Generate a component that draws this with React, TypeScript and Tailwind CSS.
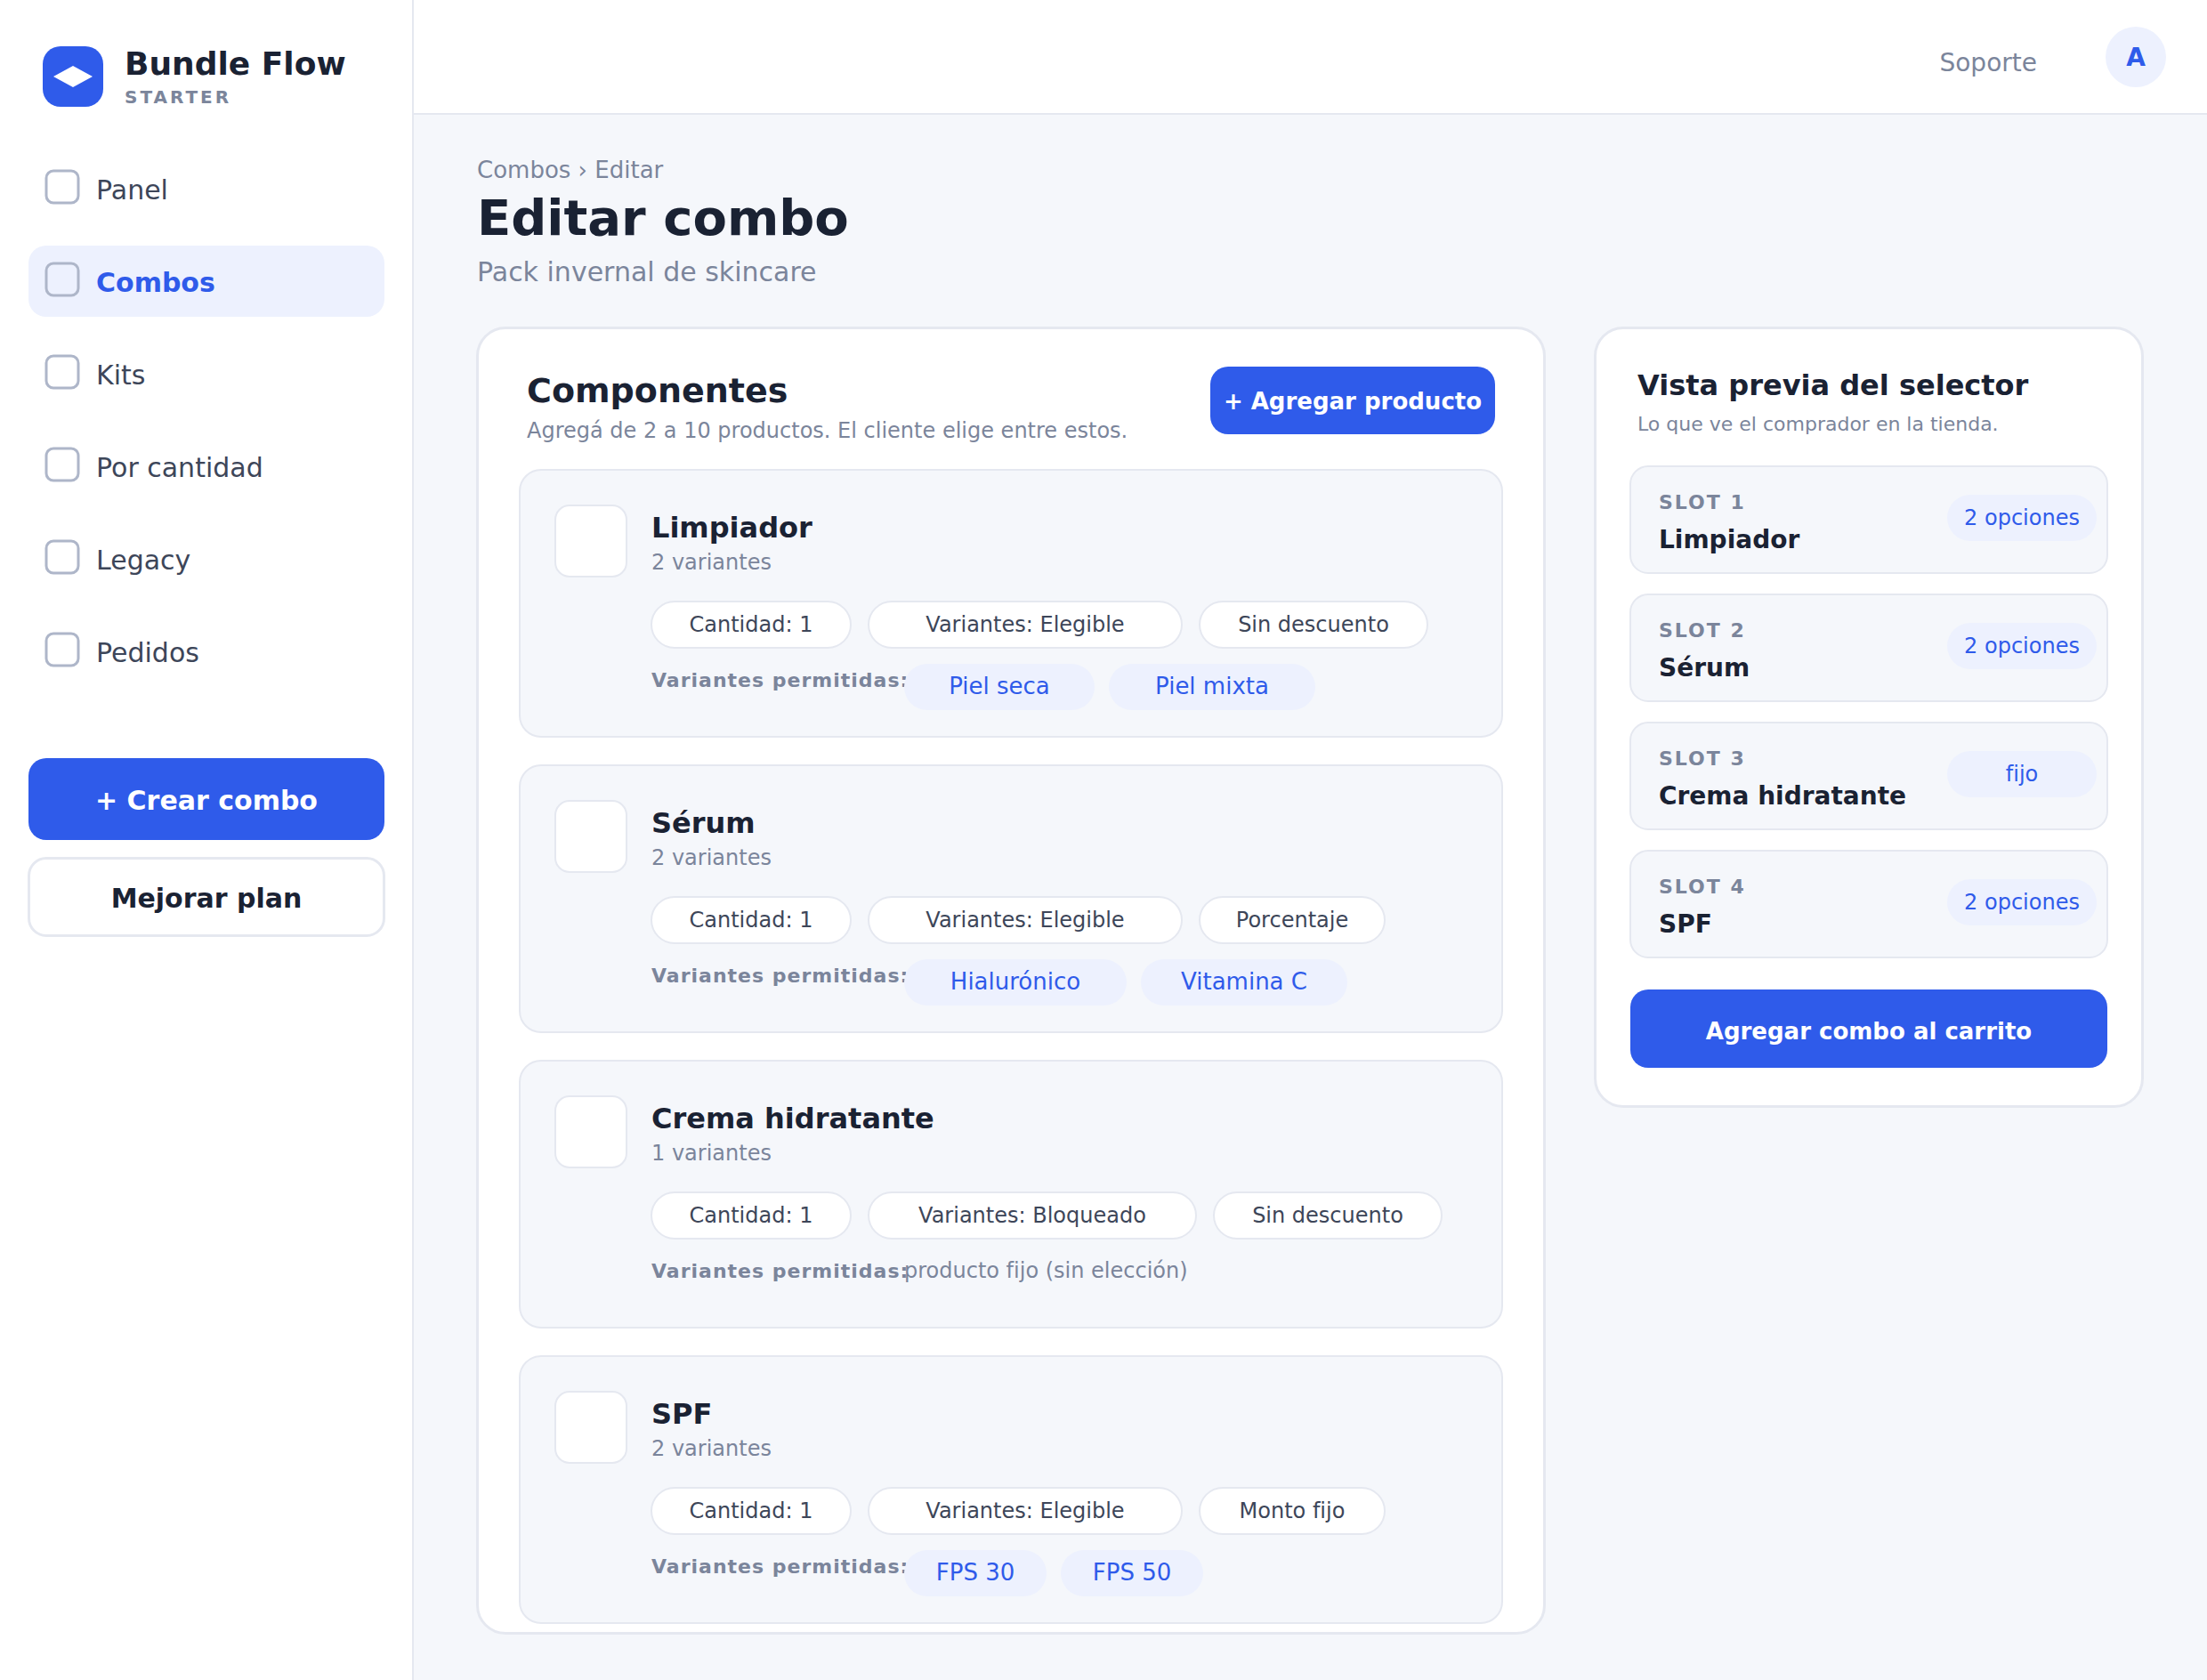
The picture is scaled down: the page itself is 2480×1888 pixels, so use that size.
type Component = {
  name: string;
  variants: number;
  mode: string;
  discount: string;
  allowed: string[];
};

const NAV = ["Panel", "Combos", "Kits", "Por cantidad", "Legacy", "Pedidos"];

const COMPONENTS: Component[] = [
  {
    name: "Limpiador",
    variants: 2,
    mode: "Elegible",
    discount: "Sin descuento",
    allowed: ["Piel seca", "Piel mixta"],
  },
  {
    name: "Sérum",
    variants: 2,
    mode: "Elegible",
    discount: "Porcentaje",
    allowed: ["Hialurónico", "Vitamina C"],
  },
  {
    name: "Crema hidratante",
    variants: 1,
    mode: "Bloqueado",
    discount: "Sin descuento",
    allowed: [],
  },
  {
    name: "SPF",
    variants: 2,
    mode: "Elegible",
    discount: "Monto fijo",
    allowed: ["FPS 30", "FPS 50"],
  },
];

function Logo() {
  return (
    <svg width="68" height="68" viewBox="0 0 68 68" aria-hidden="true">
      <rect width="68" height="68" rx="20" fill="#2f5bea" />
      <path d="M34 22 56 34 34 46 12 34Z" fill="#fff" />
    </svg>
  );
}

function NavIcon() {
  return (
    <svg width="40" height="40" viewBox="0 0 40 40" fill="none" aria-hidden="true">
      <rect x="2" y="2" width="36" height="36" rx="8" stroke="#aeb6c9" strokeWidth="3" />
    </svg>
  );
}

function Sidebar() {
  return (
    <aside className="w-[465px] shrink-0 border-r-2 border-[#e5e8f0] bg-white pt-[52px] pr-[31px] pl-8">
      <div className="flex gap-6 pl-4">
        <Logo />
        <div>
          <div className="text-[36px] leading-[40px] font-bold text-[#1a2233]">
            Bundle Flow
          </div>
          <div className="text-[20px] leading-[34px] font-bold tracking-[3px] text-[#7b859b]">
            STARTER
          </div>
        </div>
      </div>

      <nav className="mt-[46px] flex flex-col gap-6">
        {NAV.map((item) => {
          const active = item === "Combos";
          return (
            <a
              key={item}
              href="#"
              className={`flex h-20 gap-[18px] rounded-[20px] px-[18px] pt-[18px] text-[30px] leading-[48px] ${
                active
                  ? "bg-[#edf1fe] font-bold text-[#2f5bea]"
                  : "text-[#3d4659]"
              }`}
            >
              <NavIcon />
              {item}
            </a>
          );
        })}
      </nav>

      <button className="mt-20 h-[92px] w-full rounded-[20px] bg-[#2f5bea] pt-[3px] text-[30px] font-bold text-white">
        + Crear combo
      </button>
      <div className="-mx-px mt-[19px]">
        <button className="h-[90px] w-full rounded-[21px] border-3 border-[#e5e8f0] bg-white pt-[3px] text-[30px] font-bold text-[#1a2233]">
          Mejorar plan
        </button>
      </div>
    </aside>
  );
}

function Pill({ text }: { text: string }) {
  return (
    <span
      className="flex h-[54px] items-center justify-center rounded-full border-2 border-[#e5e8f0] bg-white text-[24px] whitespace-nowrap text-[#3d4659]"
      style={{ width: 50 + text.length * 16 }}
    >
      {text}
    </span>
  );
}

function Chip({ text }: { text: string }) {
  return (
    <span
      className="flex h-[52px] items-center justify-center rounded-full bg-[#edf1fe] pb-[2px] text-[26px] whitespace-nowrap text-[#2f5bea]"
      style={{ width: 52 + text.length * 18 }}
    >
      {text}
    </span>
  );
}

function ComponentCard({ item }: { item: Component }) {
  return (
    <article className="flex gap-[26px] rounded-[25px] border-2 border-[#e5e8f0] bg-[#f5f7fb] px-[38px] pt-[38px] pb-[29px]">
      <div className="size-[82px] shrink-0 rounded-[17px] border-2 border-[#e5e8f0] bg-white" />
      <div className="min-w-0">
        <div className="pl-px">
          <h3 className="text-[32px] leading-[52px] font-bold text-[#1a2233]">
            {item.name}
          </h3>
          <p className="text-[24px] leading-[26px] text-[#7b859b]">
            {item.variants} variantes
          </p>
        </div>
        <div className="mt-[30px] flex gap-[18px]">
          <Pill text="Cantidad: 1" />
          <Pill text={`Variantes: ${item.mode}`} />
          <Pill text={item.discount} />
        </div>
        <div className="mt-[17px] flex h-[52px] pl-px">
          <span className="w-[284px] shrink-0 text-[22px] leading-[38px] font-bold tracking-[1px] whitespace-nowrap text-[#7b859b]">
            Variantes permitidas:
          </span>
          {item.allowed.length > 0 ? (
            <div className="relative flex gap-4">
              {item.allowed.map((v) => (
                <Chip key={v} text={v} />
              ))}
            </div>
          ) : (
            <span className="text-[24px] leading-[36px] whitespace-nowrap text-[#7b859b]">
              producto fijo (sin elección)
            </span>
          )}
        </div>
      </div>
    </article>
  );
}

function Preview() {
  return (
    <section className="w-[618px] shrink-0 rounded-[33px] border-3 border-[#e5e8f0] bg-white px-[37px] pt-[42px] pb-[42px]">
      <div className="pl-[9px]">
        <h2 className="text-[32px] leading-[42px] font-bold text-[#1a2233]">
          Vista previa del selector
        </h2>
        <p className="text-[22px] leading-[46px] text-[#7b859b]">
          Lo que ve el comprador en la tienda.
        </p>
      </div>
      <ul className="mt-[23px] flex flex-col gap-[22px]">
        {COMPONENTS.map((item, i) => (
          <li
            key={item.name}
            className="flex items-start justify-between rounded-[21px] border-2 border-[#e5e8f0] bg-[#f5f7fb] pt-5 pr-[11px] pb-[14px] pl-[31px]"
          >
            <div>
              <div className="text-[22px] leading-[40px] font-bold tracking-[2px] text-[#7b859b]">
                SLOT {i + 1}
              </div>
              <div className="text-[28px] leading-[44px] font-bold text-[#1a2233]">
                {item.name}
              </div>
            </div>
            <span className="mt-[11px] flex h-[52px] w-[168px] items-center justify-center rounded-full bg-[#edf1fe] text-[24px] text-[#2f5bea]">
              {item.allowed.length > 0 ? `${item.allowed.length} opciones` : "fijo"}
            </span>
          </li>
        ))}
      </ul>
      <div className="mt-[35px] px-px">
        <button className="h-[88px] w-full rounded-[20px] bg-[#2f5bea] pt-[7px] text-[26px] font-bold text-white">
          Agregar combo al carrito
        </button>
      </div>
    </section>
  );
}

export default function App() {
  return (
    <div className="flex min-h-screen bg-[#f5f7fb] font-['DejaVu_Sans',sans-serif] [font-variant-ligatures:none]">
      <Sidebar />
      <div className="min-w-0 flex-1">
        {/* Top bar */}
        <header className="flex h-[129px] items-start justify-end gap-[77px] border-b-2 border-[#e5e8f0] bg-white pt-[30px] pr-[46px]">
          <a href="#" className="text-[28px] leading-[82px] text-[#7b859b]">
            Soporte
          </a>
          <button className="size-[68px] rounded-full bg-[#edf1fe] pt-[2px] text-[28px] font-bold text-[#2f5bea]">
            A
          </button>
        </header>

        <main className="pt-[44px] pr-[71px] pb-[50px] pl-[70px]">
          <div className="px-px">
            <div className="text-[26px] leading-[36px] text-[#7b859b]">
              <a href="#">Combos</a> › Editar
            </div>
            <h1 className="text-[56px] leading-[72px] font-bold text-[#1a2233]">
              Editar combo
            </h1>
            <p className="text-[30px] leading-[50px] text-[#7b859b]">
              Pack invernal de skincare
            </p>
          </div>

          <div className="mt-[36px] flex items-start gap-[54px]">
            <section className="min-w-0 flex-1 rounded-[33px] border-3 border-[#e5e8f0] bg-white px-[45px] pt-[42px] pb-[9px]">
              <div className="flex items-start justify-between px-[9px]">
                <div>
                  <h2 className="text-[38px] leading-[54px] font-bold text-[#1a2233]">
                    Componentes
                  </h2>
                  <p className="text-[24px] leading-[36px] text-[#7b859b]">
                    Agregá de 2 a 10 productos. El cliente elige entre estos.
                  </p>
                </div>
                <button className="h-[76px] w-[320px] shrink-0 rounded-[20px] bg-[#2f5bea] pt-[3px] text-[26px] font-bold whitespace-nowrap text-white">
                  + Agregar producto
                </button>
              </div>
              <div className="mt-[25px] flex flex-col gap-[30px]">
                {COMPONENTS.map((item) => (
                  <ComponentCard key={item.name} item={item} />
                ))}
              </div>
            </section>

            <Preview />
          </div>
        </main>
      </div>
    </div>
  );
}
